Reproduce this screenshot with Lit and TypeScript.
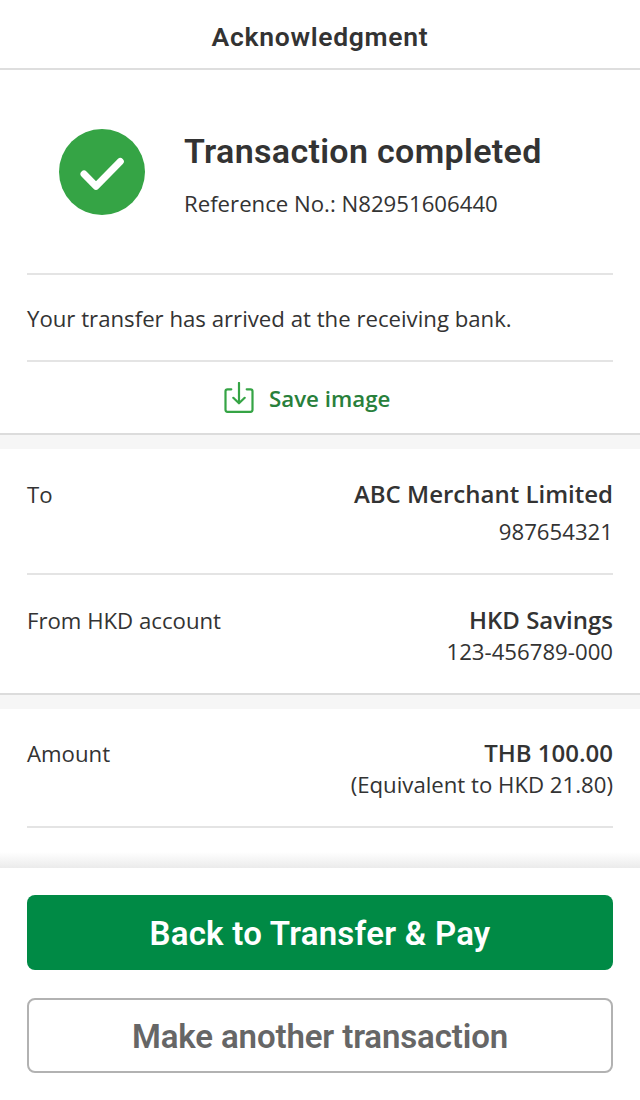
import { LitElement, html, css, nothing } from "lit";
import { customElement, property } from "lit/decorators.js";

@customElement("detail-row")
class DetailRow extends LitElement {
  @property() label = "";
  @property() primary = "";
  @property() secondary = "";

  static styles = css`
    :host { display: flex; justify-content: space-between; box-sizing: border-box; }
    .label { font-size: 22.2px; line-height: 32px; margin-top: 1px; }
    .values { display: flex; flex-direction: column; align-items: flex-end; gap: var(--row-gap, 0px); }
    .primary { font-size: 24px; font-weight: 600; line-height: 32px; }
    .secondary { font-size: 22.2px; line-height: 32px; }
  `;

  render() {
    return html`
      <div class="label">${this.label}</div>
      <div class="values">
        <div class="primary">${this.primary}</div>
        ${this.secondary ? html`<div class="secondary">${this.secondary}</div>` : nothing}
      </div>
    `;
  }
}

@customElement("app-root")
class AppRoot extends LitElement {
  static styles = css`
    :host {
      display: flex; flex-direction: column; width: 640px; height: 1100px; overflow: hidden;
      background: #fff; color: #333; font-family: "Open Sans", sans-serif;
    }
    * { box-sizing: border-box; }
    .header {
      height: 70px; border-bottom: 2px solid #dedede; padding-top: 21px; text-align: center;
      font: 600 26.5px/32px Roboto, sans-serif; letter-spacing: 0.7px;
    }
    .status { display: flex; height: 203px; padding: 59px 0 0 59px; gap: 39px; }
    .badge { width: 86px; height: 86px; flex: none; display: block; }
    .title { font: 600 34px/44px Roboto, sans-serif; letter-spacing: 0.33px; white-space: nowrap; }
    .reference { font-size: 22.2px; line-height: 32px; margin-top: 15px; white-space: nowrap; }
    .message {
      height: 89px; margin: 0 27px; padding-top: 28px; font-size: 22.2px; line-height: 32px;
      border-top: 2px solid #e4e4e4; border-bottom: 2px solid #e4e4e4;
    }
    .save {
      height: 71px; display: flex; padding: 20px 0 0 223px; gap: 14px;
      color: #28803b; font-size: 22.3px; font-weight: 600; line-height: 34px;
    }
    .save svg { display: block; width: 32px; height: 32px; }
    .band { height: 16px; background: #f6f6f6; border-top: 2px solid #dcdcdc; }
    .to, .from, .amount { margin: 0 27px; }
    .to { height: 126px; padding-top: 29px; border-bottom: 2px solid #e4e4e4; --row-gap: 6px; }
    .from { height: 118px; padding-top: 29px; }
    .amount { height: 119px; padding-top: 28px; border-bottom: 2px solid #e4e4e4; }
    .fade { height: 40px; background: linear-gradient(#fff 60%, #ebebeb); }
    .actions { display: flex; flex-direction: column; gap: 28px; padding: 27px 27px 0; }
    .button {
      width: 586px; height: 75px; padding: 2px 0 0; border-radius: 8px; cursor: pointer;
      font: 600 33px/40px Roboto, sans-serif; letter-spacing: 0.25px;
    }
    .solid { background: #008a45; border: 0; color: #fff; }
    .outline { background: #fff; border: 2px solid #b2b2b2; color: #666; letter-spacing: -0.12px; }
  `;

  render() {
    return html`
      <div class="header">Acknowledgment</div>
      <div class="status">
        <svg class="badge" viewBox="0 0 86 86">
          <circle cx="43" cy="43" r="43" fill="#35a445" />
          <path d="M25 45 L37 57.2 L61.3 32.5" fill="none" stroke="#fff" stroke-width="7" stroke-linecap="round" stroke-linejoin="round" />
        </svg>
        <div>
          <div class="title">Transaction completed</div>
          <div class="reference">Reference No.: N82951606440</div>
        </div>
      </div>
      <div class="message">Your transfer has arrived at the receiving bank.</div>
      <div class="save">
        <svg viewBox="0 0 32 32" fill="none" stroke="#35a445" stroke-width="2.2" stroke-linecap="round" stroke-linejoin="round">
          <path d="M8.3 7.3H4.5a2 2 0 0 0-2 2V27.8a2 2 0 0 0 2 2H27.5a2 2 0 0 0 2-2V9.3a2 2 0 0 0-2-2H23.7" />
          <path d="M16 1V21.3M10.3 15.8L16 21.3L21.7 15.8" />
        </svg>
        <span>Save image</span>
      </div>
      <div class="band"></div>
      <detail-row class="to" label="To" primary="ABC Merchant Limited" secondary="987654321"></detail-row>
      <detail-row class="from" label="From HKD account" primary="HKD Savings" secondary="123-456789-000"></detail-row>
      <div class="band"></div>
      <detail-row class="amount" label="Amount" primary="THB 100.00" secondary="(Equivalent to HKD 21.80)"></detail-row>
      <div class="fade"></div>
      <div class="actions">
        <button class="button solid">Back to Transfer &amp; Pay</button>
        <button class="button outline">Make another transaction</button>
      </div>
    `;
  }
}
